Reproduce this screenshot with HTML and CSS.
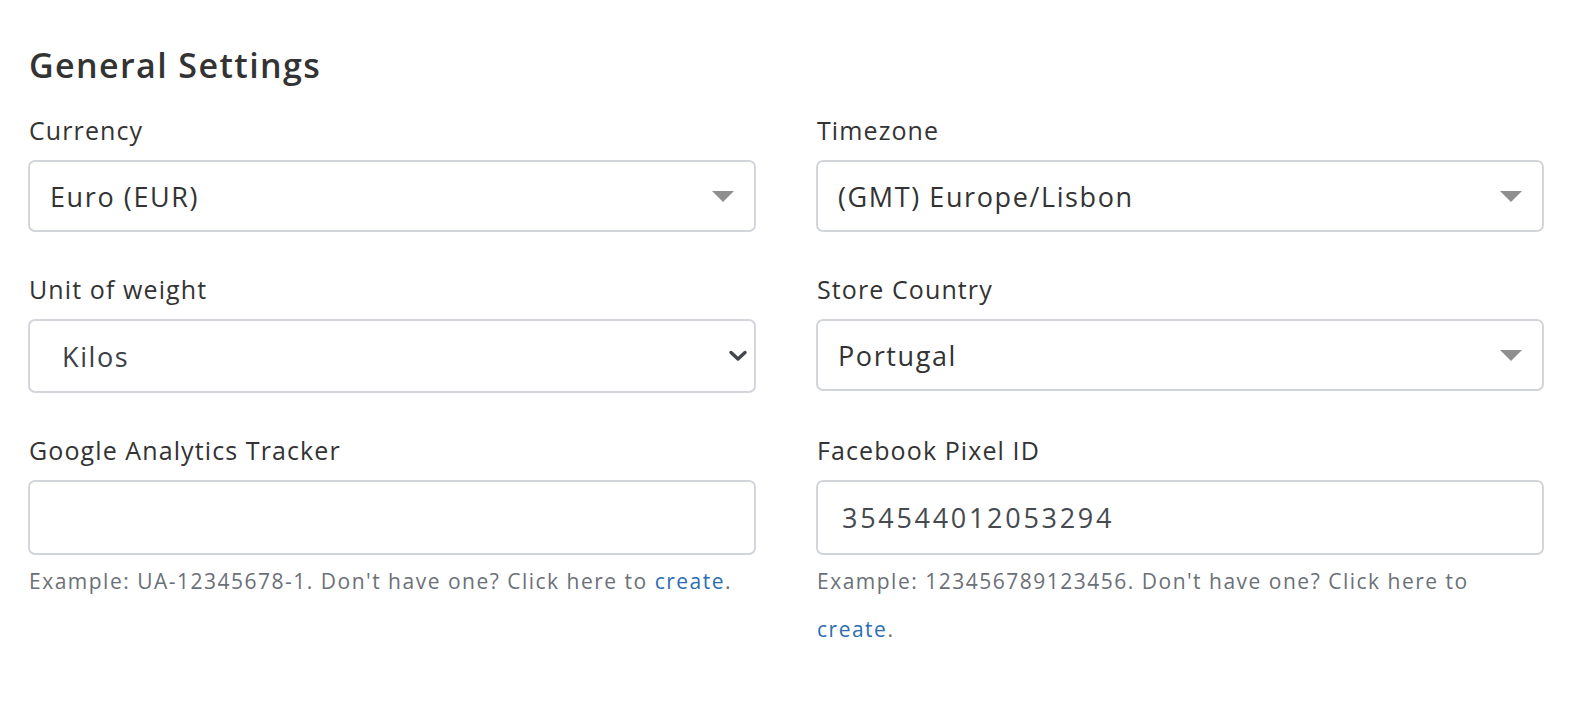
FILE: index.html
```html
<!DOCTYPE html>
<html lang="en">
<head>
<meta charset="utf-8">
<title>General Settings</title>
<link rel="stylesheet" href="styles.css">
</head>
<body>
<section class="settings">
  <h2 class="title">General Settings</h2>
  <div class="grid">
    <div class="field">
      <label class="label">Currency</label>
      <div class="select custom">
        <span class="value">Euro (EUR)</span>
        <span class="caret"></span>
      </div>
    </div>
    <div class="field">
      <label class="label">Timezone</label>
      <div class="select custom">
        <span class="value">(GMT) Europe/Lisbon</span>
        <span class="caret"></span>
      </div>
    </div>
    <div class="field">
      <label class="label">Unit of weight</label>
      <div class="select native">
        <span class="value">Kilos</span>
        <svg class="chevron" width="20" height="14" viewBox="0 0 20 14"><path d="M3 3.5 L10 10 L17 3.5" fill="none" stroke="#43474c" stroke-width="3.4" stroke-linecap="round" stroke-linejoin="round"/></svg>
      </div>
    </div>
    <div class="field">
      <label class="label">Store Country</label>
      <div class="select custom">
        <span class="value">Portugal</span>
        <span class="caret"></span>
      </div>
    </div>
    <div class="field">
      <label class="label">Google Analytics Tracker</label>
      <div class="input"></div>
      <p class="help">Example: UA-12345678-1. Don't have one? Click here to <a href="#">create</a>.</p>
    </div>
    <div class="field">
      <label class="label">Facebook Pixel ID</label>
      <div class="input"><span class="value num">354544012053294</span></div>
      <p class="help narrow">Example: 123456789123456. Don't have one? Click here to <a href="#">create</a>.</p>
    </div>
  </div>
</section>
</body>
</html>
```
FILE: styles.css
```css
html, body {
  margin: 0;
  padding: 0;
  background: #ffffff;
}
body {
  font-family: "Open Sans", Lato, "Liberation Sans", sans-serif;
  color: #333333;
}
.settings {
  padding: 45px 40px 0 28px;
}
.title {
  margin: 0 0 28px 1px;
  font-size: 34px;
  line-height: 40px;
  font-weight: 600;
  letter-spacing: 1.4px;
  color: #333333;
}
.grid {
  display: grid;
  grid-template-columns: 728px 728px;
  column-gap: 60px;
  row-gap: 40px;
}
.field {
  display: flex;
  flex-direction: column;
}
.label {
  display: block;
  font-size: 25px;
  line-height: 34px;
  letter-spacing: 1.1px;
  margin: 0 0 13px 1px;
  color: #333333;
}
.select, .input {
  box-sizing: border-box;
  height: 72px;
  border: 2px solid #d2d5da;
  border-radius: 7px;
  display: flex;
  align-items: center;
  background: #fff;
}
.select.native {
  height: 74px;
}
.input {
  height: 75px;
}
.value {
  font-size: 27px;
  letter-spacing: 1.6px;
  color: #333333;
  padding-left: 20px;
}
.native .value {
  padding-left: 32px;
  color: #3b4046;
}
.num {
  padding-left: 24px;
  letter-spacing: 2.7px;
  color: #454a50;
}
.custom {
  justify-content: space-between;
}
.caret {
  width: 0;
  height: 0;
  border-left: 11px solid transparent;
  border-right: 11px solid transparent;
  border-top: 11px solid #8f8f8f;
  margin-right: 20px;
}
.native {
  justify-content: space-between;
}
.chevron {
  margin-right: 6px;
}
.help {
  margin: 2px 0 0 1px;
  font-size: 21px;
  line-height: 48px;
  letter-spacing: 1.5px;
  color: #6b7077;
}
.help.narrow {
  max-width: 710px;
}
.help a {
  color: #2c6db2;
  text-decoration: none;
}
```
